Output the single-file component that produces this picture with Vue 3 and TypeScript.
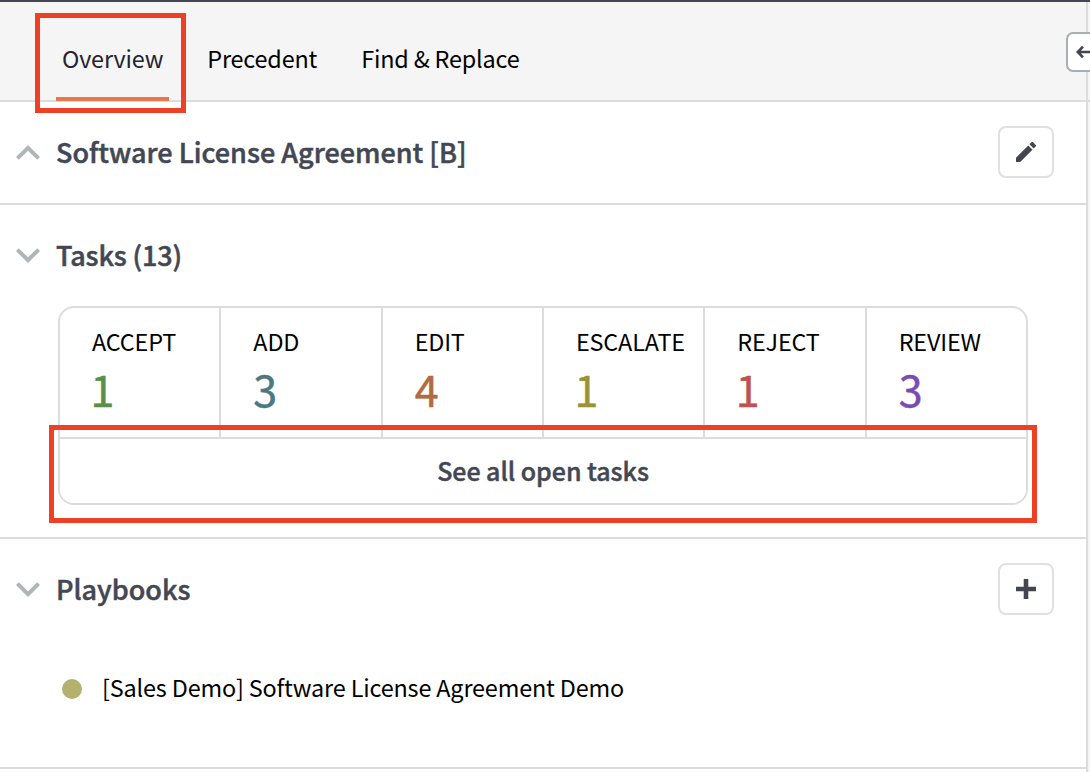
<script setup lang="ts">
interface Tab {
  label: string
  active?: boolean
}

interface TaskCount {
  label: string
  count: number
  tone: string
}

const tabs: Tab[] = [
  { label: 'Overview', active: true },
  { label: 'Precedent' },
  { label: 'Find & Replace' },
]

const tasks: TaskCount[] = [
  { label: 'ACCEPT', count: 1, tone: 'green' },
  { label: 'ADD', count: 3, tone: 'teal' },
  { label: 'EDIT', count: 4, tone: 'rust' },
  { label: 'ESCALATE', count: 1, tone: 'olive' },
  { label: 'REJECT', count: 1, tone: 'red' },
  { label: 'REVIEW', count: 3, tone: 'purple' },
]
</script>

<template>
  <div class="page">
    <header class="header">
      <nav class="tabs">
        <a v-for="tab in tabs" :key="tab.label" class="tab" :class="{ active: tab.active }">{{ tab.label }}</a>
      </nav>
    </header>
    <main class="panel">
      <section class="section document">
        <div class="heading">
          <svg class="chevron" viewBox="0 0 24 24"><path d="M12 8.5l-6 6 1.41 1.41L12 11.33l4.59 4.58L18 14.5z" /></svg>
          <h2 class="title">Software License Agreement [B]</h2>
          <button class="icon-button" aria-label="Edit">
            <svg viewBox="3 3 18 18">
              <path d="M3 17.25V21h3.75L17.81 9.94l-3.75-3.75L3 17.25zM20.71 7.04c.39-.39.39-1.02 0-1.41l-2.34-2.34c-.39-.39-1.02-.39-1.41 0l-1.83 1.83 3.75 3.75 1.83-1.83z" />
            </svg>
          </button>
        </div>
      </section>

      <section class="section task-section">
        <div class="heading">
          <svg class="chevron" viewBox="0 0 24 24"><path d="M16.59 8.59L12 13.17 7.41 8.59 6 10l6 6 6-6z" /></svg>
          <h2 class="title tasks-title">Tasks (13)</h2>
        </div>
        <div class="card">
          <div class="counts">
            <div v-for="task in tasks" :key="task.label" class="cell">
              <span class="label">{{ task.label }}</span>
              <span class="count" :class="[task.tone, { narrow: task.count === 1 }]">{{ task.count }}</span>
            </div>
          </div>
          <button class="see-all">See all open tasks</button>
        </div>
      </section>

      <section class="section playbooks">
        <div class="heading">
          <svg class="chevron" viewBox="0 0 24 24"><path d="M16.59 8.59L12 13.17 7.41 8.59 6 10l6 6 6-6z" /></svg>
          <h2 class="title">Playbooks</h2>
          <button class="icon-button" aria-label="Add playbook">
            <svg viewBox="0 0 20 20"><path d="M7.7 0h4.6v7.7H20v4.6h-7.7V20H7.7v-7.7H0V7.7h7.7z" /></svg>
          </button>
        </div>
        <div class="playbook">
          <span class="dot"></span>
          <span class="playbook-name">[Sales Demo] Software License Agreement Demo</span>
        </div>
      </section>
    </main>

    <div class="divider"></div>
    <button class="collapse" aria-label="Collapse">
      <svg viewBox="0 0 20 14"><path d="M7 1.6L1.8 7 7 12.4M2 7h18" /></svg>
    </button>
    <div class="callout callout-tab"></div>
    <div class="callout callout-tasks"></div>
  </div>
</template>

<style>
body {
  margin: 0;
  overflow: hidden;
}
</style>

<style scoped>
.page {
  position: relative;
  box-sizing: border-box;
  width: 1090px;
  height: 772px;
  overflow: hidden;
  border-top: 2px solid #434651;
  background: #f5f5f5;
  color: #000;
  font-family: "Noto Sans CJK SC", "Noto Sans", sans-serif;
  font-size: 23.4px;
  letter-spacing: -0.17px;
}

button {
  box-sizing: border-box;
  padding: 0;
  background: #fff;
  font-family: inherit;
}

.header {
  box-sizing: border-box;
  height: 100px;
  padding-left: 56px;
  border-bottom: 2px solid #dcdcdc;
}

.tabs {
  display: flex;
  gap: 32px;
}

.tab {
  box-sizing: border-box;
  height: 99px;
  padding: 0 6px;
  line-height: 112px;
  white-space: nowrap;
  border-bottom: 4px solid transparent;
}

.tab.active {
  color: #252433;
  border-color: #e5774b;
}

.panel {
  width: 1086px;
  height: 670px;
  background: #fff;
}

.section {
  box-sizing: border-box;
  border-bottom: 2px solid #dcdcdc;
}

.document {
  height: 103px;
}

.task-section {
  height: 334px;
}

.playbooks {
  height: 230px;
}

.heading {
  display: flex;
  align-items: center;
  height: 99px;
  padding: 0 32px 0 4px;
}

.chevron {
  width: 48px;
  height: 48px;
  flex: none;
  fill: #b0b6b7;
}

.title {
  flex: 1;
  margin: 0 0 0 4px;
  color: #434753;
  font-size: 27px;
  font-weight: 500;
  letter-spacing: 0;
  line-height: 40px;
  white-space: nowrap;
  -webkit-text-stroke: 0.5px #434753;
}

.tasks-title {
  letter-spacing: -0.15px;
}

.icon-button {
  display: flex;
  align-items: center;
  justify-content: center;
  width: 56px;
  height: 52px;
  border: 2px solid #e0e0e0;
  border-radius: 8px;
}

.icon-button svg {
  width: 20px;
  height: 20px;
  fill: #434651;
}

.card {
  box-sizing: border-box;
  width: 970px;
  height: 199px;
  margin: 2px 0 0 58px;
  border: 2px solid #dcdcdc;
  border-radius: 16px;
  overflow: hidden;
}

.counts {
  display: grid;
  grid-template-columns: repeat(6, 161.33px);
  height: 129px;
}

.cell {
  display: flex;
  flex-direction: column;
  padding: 16px 0 0 32px;
  border-right: 2px solid #dcdcdc;
}

.label {
  letter-spacing: -0.17px;
  line-height: 34px;
}

.count {
  font-size: 43px;
  line-height: 60px;
  -webkit-text-stroke: 0.5px currentColor;
}

.count.narrow {
  margin-left: -1.6px;
}

.green { color: #57904a; }
.teal { color: #4b797f; }
.rust { color: #b06b41; }
.olive { color: #9b9135; }
.red { color: #bd5252; }
.purple { color: #7a4bb0; }

.see-all {
  display: block;
  width: 966px;
  height: 66px;
  padding-bottom: 2px;
  border: 0;
  border-top: 2px solid #dcdcdc;
  color: #434753;
  font-size: 25px;
  font-weight: 500;
  letter-spacing: -0.05px;
  -webkit-text-stroke: 0.45px #434753;
}

.playbook {
  display: flex;
  align-items: center;
  height: 40px;
  margin: 31px 0 0 62px;
}

.dot {
  width: 20px;
  height: 20px;
  border-radius: 50%;
  background: #b3b16d;
}

.playbook-name {
  margin-left: 20px;
  padding-bottom: 4px;
  letter-spacing: -0.155px;
  white-space: nowrap;
}

.divider {
  position: absolute;
  top: 0;
  left: 1086px;
  width: 2px;
  height: 770px;
  background: #dcdcdc;
}

.collapse {
  position: absolute;
  top: 30px;
  left: 1066px;
  width: 56px;
  height: 40px;
  border: 2px solid #a9afb2;
  border-radius: 7px;
  text-align: left;
}

.collapse svg {
  display: block;
  width: 20px;
  height: 14px;
  margin-left: 8px;
  fill: none;
  stroke: #434651;
  stroke-width: 2.6;
}

.callout {
  position: absolute;
  box-sizing: border-box;
  border: 5px solid #ed4024;
  pointer-events: none;
}

.callout-tab {
  top: 11px;
  left: 35px;
  width: 151px;
  height: 100px;
}

.callout-tasks {
  top: 423px;
  left: 49px;
  width: 988px;
  height: 98px;
}
</style>
